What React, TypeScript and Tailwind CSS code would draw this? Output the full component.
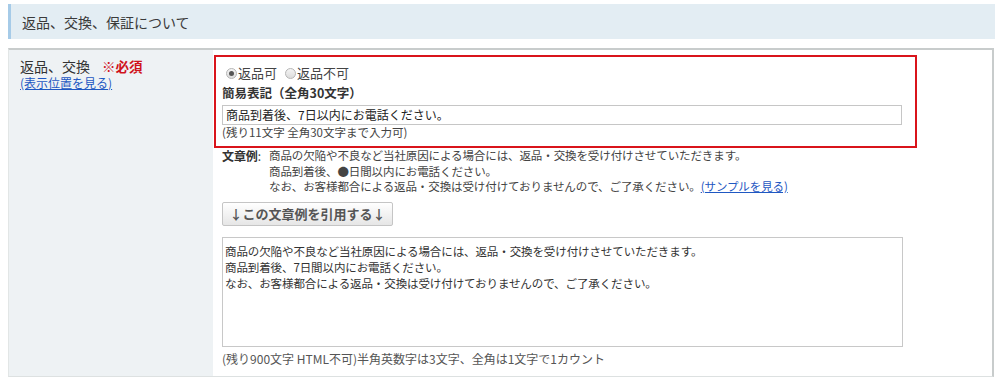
import React from "react";

function Radio({ checked, label }: { checked?: boolean; label: string }) {
  return (
    <span className="inline-flex items-center mr-[8px]">
      <span className="w-[11px] h-[11px] rounded-full border border-[#b5b5b5] bg-gradient-to-b from-[#f4f4f4] to-[#dcdcdc] flex items-center justify-center">
        {checked && <span className="w-[5px] h-[5px] rounded-full bg-[#555]" />}
      </span>
      <span className="ml-[1px]">{label}</span>
    </span>
  );
}

export default function App() {
  return (
    <div
      className="w-[1000px] h-[382px] bg-white overflow-hidden pt-[4px] pl-[8px] text-[#333]"
      style={{ fontFamily: '"Noto Sans CJK JP", "Noto Sans", sans-serif' }}
    >
      <div className="w-[987px] h-[35px] bg-[#e3edf3] border-l-[3px] border-[#a6cbe8] pl-[11px] flex items-center text-[14px] leading-none text-[#3a3a3a]">
        返品、交換、保証について
      </div>

      <div className="mt-[9px] w-[986px] border-t-2 border-r-2 border-l border-t-[#c8cccc] border-r-[#c8cccc] border-l-[#e2e6e6] flex border-b border-b-[#dde1e1] h-[329px]">
        <div className="w-[204px] bg-[#eef2f4] pl-[11px] pt-[8px]">
          <div className="text-[14px] leading-[16px] text-[#333]">
            返品、交換<span className="ml-[12px] text-[#d0121b] font-bold text-[13.5px]">※必須</span>
          </div>
          <a className="block mt-[2px] text-[12px] leading-[13px] text-[#1f58c2] underline">(表示位置を見る)</a>
        </div>

        <div className="flex-1 pl-[1px] pt-[5px]">
          <div className="w-[703px] h-[93px] border-2 border-[#d9141b] pl-[6px] pt-[8px]">
            <div className="flex items-center text-[13px] leading-[16px] pl-[4px] text-[#444]">
              <Radio checked label="返品可" />
              <Radio label="返品不可" />
            </div>
            <div className="mt-[4px] text-[12.5px] leading-[16px] font-bold text-[#333]">
              簡易表記（全角30文字）
            </div>
            <div className="mt-[4px] w-[680px] h-[20px] border border-[#c6c6c6] flex items-center pl-[3px] text-[12px] leading-none text-[#222]">
              商品到着後、7日以内にお電話ください。
            </div>
            <div className="text-[11.5px] leading-[12px] mt-[1px] text-[#444]">
              (残り11文字 全角30文字まで入力可)
            </div>
          </div>

          <div className="pl-[8px]">
            <div className="flex text-[11.5px] tracking-[-0.1px] leading-[15.5px] text-[#444]">
              <div className="w-[47px] shrink-0 text-[12px]">
                <span className="font-bold text-[#333]">文章例</span>:
              </div>
              <div>
                <div>商品の欠陥や不良など当社原因による場合には、返品・交換を受け付けさせていただきます。</div>
                <div>商品到着後、●日間以内にお電話ください。</div>
                <div>
                  なお、お客様都合による返品・交換は受け付けておりませんので、ご了承ください。
                  <a className="text-[#1f58c2] underline">(サンプルを見る)</a>
                </div>
              </div>
            </div>

            <button className="mt-[7px] w-[171px] h-[24px] border border-[#c5c5c5] rounded-[2px] bg-gradient-to-b from-[#ffffff] to-[#e6e6e6] text-[13px] leading-none text-[#555] font-bold flex items-center justify-center">
              ↓この文章例を引用する↓
            </button>

            <div className="mt-[11px] w-[681px] h-[110px] border border-[#c8c8c8] pl-[2px] pt-[5px] text-[11.5px] tracking-[-0.1px] leading-[16px] text-[#333]">
              <div>商品の欠陥や不良など当社原因による場合には、返品・交換を受け付けさせていただきます。</div>
              <div>商品到着後、7日間以内にお電話ください。</div>
              <div>なお、お客様都合による返品・交換は受け付けておりませんので、ご了承ください。</div>
            </div>

            <div className="mt-[5px] text-[12px] leading-[14px] text-[#555]">
              (残り900文字 HTML不可)半角英数字は3文字、全角は1文字で1カウント
            </div>
          </div>
        </div>
      </div>
    </div>
  );
}
